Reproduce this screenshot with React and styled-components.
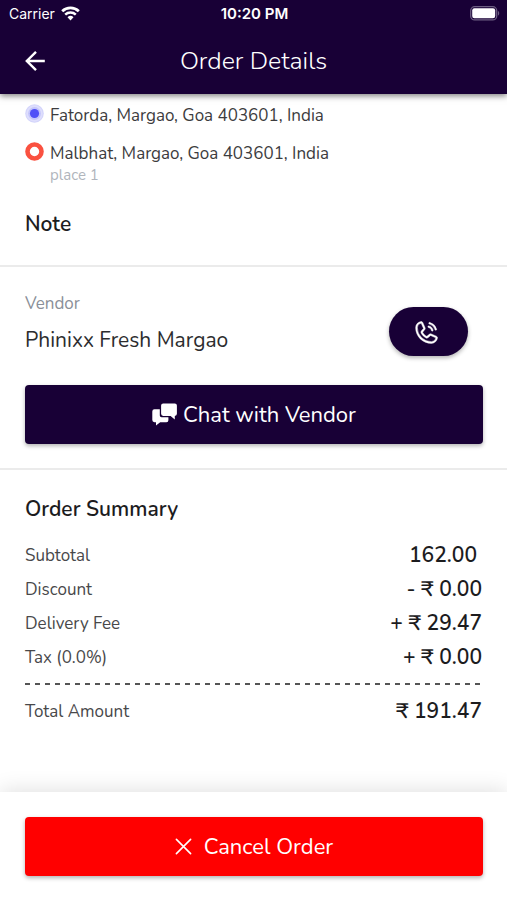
import React from 'react'
import styled, { createGlobalStyle } from 'styled-components'
import { PiPhoneCall } from 'react-icons/pi'

const GlobalStyle = createGlobalStyle`
  * {
    box-sizing: border-box;
  }

  body {
    margin: 0;
    background: #fff;
    color: #1c1c1e;
    font-family: 'Nunito', 'Noto Sans', sans-serif;
  }

  button {
    font-family: inherit;
    cursor: pointer;
  }
`

const Page = styled.div`
  display: flex;
  flex-direction: column;
  min-height: 100vh;
`

const TopBar = styled.header`
  background: #180036;
  color: #fff;
  box-shadow: 0 2px 6px rgba(0, 0, 0, 0.5);
`

const StatusBar = styled.div`
  display: grid;
  grid-template-columns: 1fr auto 1fr;
  align-items: center;
  height: 27px;
  padding: 0 7px 0 9px;
  font-family: 'Inter', sans-serif;
  font-size: 15px;
`

const Carrier = styled.span`
  display: flex;
  align-items: center;
  gap: 6px;
  font-size: 14px;
`

const Clock = styled.span`
  font-weight: 600;
`

const BatterySlot = styled.span`
  display: flex;
  justify-content: flex-end;
`

const TitleBar = styled.div`
  display: grid;
  grid-template-columns: 24px 1fr 24px;
  align-items: center;
  height: 67px;
  padding: 0 24px;
`

const BackButton = styled.button`
  display: flex;
  padding: 0;
  border: 0;
  background: none;
  color: inherit;
`

const Title = styled.h1`
  margin: 0;
  font-size: 25px;
  font-weight: 300;
  line-height: 32px;
  text-align: center;
`

const Content = styled.main`
  flex: 1;
`

const Section = styled.section`
  padding: ${(props) => props.$padding};
  border-bottom: ${(props) => (props.$last ? '0' : '2px solid #ebebeb')};
`

const Stops = styled.div`
  display: grid;
  row-gap: 14px;
  margin-bottom: 24px;
`

const Stop = styled.div`
  display: grid;
  grid-template-columns: 19px 1fr;
  column-gap: 6px;
`

const StopText = styled.p`
  margin: 0;
  color: #3c3c3e;
  font-size: 17px;
  line-height: 24px;
`

const StopNote = styled.p`
  margin: 0;
  color: #b0b5bc;
  font-size: 15px;
  line-height: 18px;
`

const SectionTitle = styled.h2`
  margin: 0;
  font-size: 21px;
  font-weight: 600;
  line-height: 32px;
`

const VendorRow = styled.div`
  display: flex;
  align-items: flex-end;
  justify-content: space-between;
  padding-right: 15px;
  margin-bottom: 29px;
`

const VendorLabel = styled.p`
  margin: 0;
  color: #8a8f98;
  font-size: 17px;
  line-height: 24px;
`

const VendorName = styled.p`
  margin: 8px 0 0;
  color: #2c2c2e;
  font-size: 21px;
  line-height: 32px;
`

const CallButton = styled.button`
  display: flex;
  align-items: center;
  justify-content: center;
  width: 79px;
  height: 49px;
  border: 0;
  border-radius: 25px;
  background: #180036;
  color: #fff;
  box-shadow: 0 2px 4px rgba(0, 0, 0, 0.3);
  padding: 0 4px 0 0;
`

const WideButton = styled.button`
  display: flex;
  align-items: center;
  justify-content: center;
  gap: ${(props) => props.$gap};
  width: 100%;
  height: 59px;
  padding: 0;
  border: 0;
  border-radius: 4px;
  background: ${(props) => props.$color};
  color: #fff;
  font-size: 22px;
  font-weight: 400;
  line-height: 32px;
  box-shadow: 0 2px 4px rgba(0, 0, 0, 0.3);
`

const FeeTable = styled.table`
  width: 100%;
  margin-top: 13px;
  border-collapse: collapse;
`

const FeeLabel = styled.th`
  height: 34px;
  padding: 0;
  color: #48484a;
  font-size: 17px;
  font-weight: 400;
  text-align: left;
`

const FeeAmount = styled.td`
  padding: 0 ${(props) => (props.$inset ? '5px' : '0')} 0 0;
  font-size: 21px;
  font-weight: 600;
  line-height: 32px;
  text-align: right;
`

const DividerCell = styled.td`
  height: 20px;
  padding: 0;
`

const Dashes = styled.div`
  height: 2px;
  background: repeating-linear-gradient(
    to right,
    #555 0 5px,
    transparent 5px 10px
  );
`

const Footer = styled.footer`
  padding: 25px 24px 24px 25px;
  background: #fff;
  box-shadow: 0 -2px 20px rgba(0, 0, 0, 0.12);
`

const fees = [
  { label: 'Subtotal', amount: '162.00', inset: true },
  { label: 'Discount', amount: '- ₹ 0.00' },
  { label: 'Delivery Fee', amount: '+ ₹ 29.47' },
  { label: 'Tax (0.0%)', amount: '+ ₹ 0.00' },
]

function WifiIcon() {
  return (
    <svg width="19" height="15" viewBox="0 0 19 15" fill="none">
      <path d="M1.2 5.2a12 12 0 0 1 16.6 0" stroke="#fff" strokeWidth="2.8" />
      <path d="M4.2 8.7a7.7 7.7 0 0 1 10.6 0" stroke="#fff" strokeWidth="2.5" />
      <path d="M9.5 14.4l-3-3.2a4.3 4.3 0 0 1 6 0z" fill="#fff" />
    </svg>
  )
}

function BatteryIcon() {
  return (
    <svg width="30" height="15" viewBox="0 0 30 15" fill="none">
      <rect x="0.7" y="0.7" width="26" height="13.2" rx="4" stroke="#6d5e82" strokeWidth="1.3" />
      <rect x="2.2" y="2.3" width="23" height="10" rx="2.2" fill="#fff" />
      <path d="M28 5c1.6.6 1.6 4 0 4.6z" fill="#6d5e82" />
    </svg>
  )
}

function ArrowIcon() {
  return (
    <svg width="22" height="22" viewBox="0 0 22 22" fill="none" stroke="#fff" strokeWidth="2.4">
      <path d="M20.8 11H3M12 1.8L2.8 11l9.2 9.2" />
    </svg>
  )
}

function PickupIcon() {
  return (
    <svg width="19" height="19" viewBox="0 0 19 19">
      <circle cx="9.5" cy="9.5" r="9.3" fill="#d3d4fb" />
      <circle cx="9.5" cy="9.5" r="8.2" fill="#dedefc" />
      <circle cx="9.5" cy="9.5" r="6.4" fill="#c4c5fb" />
      <circle cx="9.5" cy="9.5" r="4.6" fill="#4f4ff7" />
    </svg>
  )
}

function DropoffIcon() {
  return (
    <svg width="19" height="19" viewBox="0 0 19 19">
      <circle cx="9.5" cy="9.5" r="7" fill="#fff" stroke="#fa5140" strokeWidth="4.6" />
    </svg>
  )
}

function ChatIcon() {
  return (
    <svg width="25" height="23" viewBox="0 0 25 23" fill="#fff">
      <path d="M11.2 0.5h11.6a2.1 2.1 0 0 1 2.1 2.1v8.2a2.1 2.1 0 0 1-2.1 2.1v3.5l-4.2-3.5h-7.4a2.1 2.1 0 0 1-2.1-2.1V2.6a2.1 2.1 0 0 1 2.1-2.1z" />
      <path d="M7.8 6.3v6.2a1.8 1.8 0 0 0 1.8 1.8h6.8v2.9a2 2 0 0 1-2 2H8.2L4 22.6v-3.4H2.4a2.1 2.1 0 0 1-2.1-2.1V8.4a2.1 2.1 0 0 1 2.1-2.1z" />
    </svg>
  )
}

function CloseIcon() {
  return (
    <svg width="17" height="17" viewBox="0 0 17 17" fill="none" stroke="#fff" strokeWidth="1.6" strokeLinecap="round">
      <path d="M1.4 1.4l14.2 14.2M15.6 1.4L1.4 15.6" />
    </svg>
  )
}

export default function App() {
  return (
    <Page>
      <GlobalStyle />
      <TopBar>
        <StatusBar>
          <Carrier>
            Carrier
            <WifiIcon />
          </Carrier>
          <Clock>10:20 PM</Clock>
          <BatterySlot>
            <BatteryIcon />
          </BatterySlot>
        </StatusBar>
        <TitleBar>
          <BackButton aria-label="Back">
            <ArrowIcon />
          </BackButton>
          <Title>Order Details</Title>
        </TitleBar>
      </TopBar>

      <Content>
        <Section $padding="10px 25px 25px">
          <Stops>
            <Stop>
              <PickupIcon />
              <StopText>Fatorda, Margao, Goa 403601, India</StopText>
            </Stop>
            <Stop>
              <DropoffIcon />
              <div>
                <StopText>Malbhat, Margao, Goa 403601, India</StopText>
                <StopNote>place 1</StopNote>
              </div>
            </Stop>
          </Stops>
          <SectionTitle>Note</SectionTitle>
        </Section>

        <Section $padding="25px 24px 24px 25px">
          <VendorRow>
            <div>
              <VendorLabel>Vendor</VendorLabel>
              <VendorName>Phinixx Fresh Margao</VendorName>
            </div>
            <CallButton aria-label="Call vendor">
              <PiPhoneCall size={28} stroke="currentColor" strokeWidth={4} />
            </CallButton>
          </VendorRow>
          <WideButton $color="#180036" $gap="6px">
            <ChatIcon />
            Chat with Vendor
          </WideButton>
        </Section>

        <Section $padding="23px 25px" $last>
          <SectionTitle>Order Summary</SectionTitle>
          <FeeTable>
            <tbody>
              {fees.map((fee) => (
                <tr key={fee.label}>
                  <FeeLabel scope="row">{fee.label}</FeeLabel>
                  <FeeAmount $inset={fee.inset}>{fee.amount}</FeeAmount>
                </tr>
              ))}
              <tr>
                <DividerCell colSpan={2}>
                  <Dashes />
                </DividerCell>
              </tr>
              <tr>
                <FeeLabel scope="row">Total Amount</FeeLabel>
                <FeeAmount>₹ 191.47</FeeAmount>
              </tr>
            </tbody>
          </FeeTable>
        </Section>
      </Content>

      <Footer>
        <WideButton $color="#ff0000" $gap="12px">
          <CloseIcon />
          Cancel Order
        </WideButton>
      </Footer>
    </Page>
  )
}
